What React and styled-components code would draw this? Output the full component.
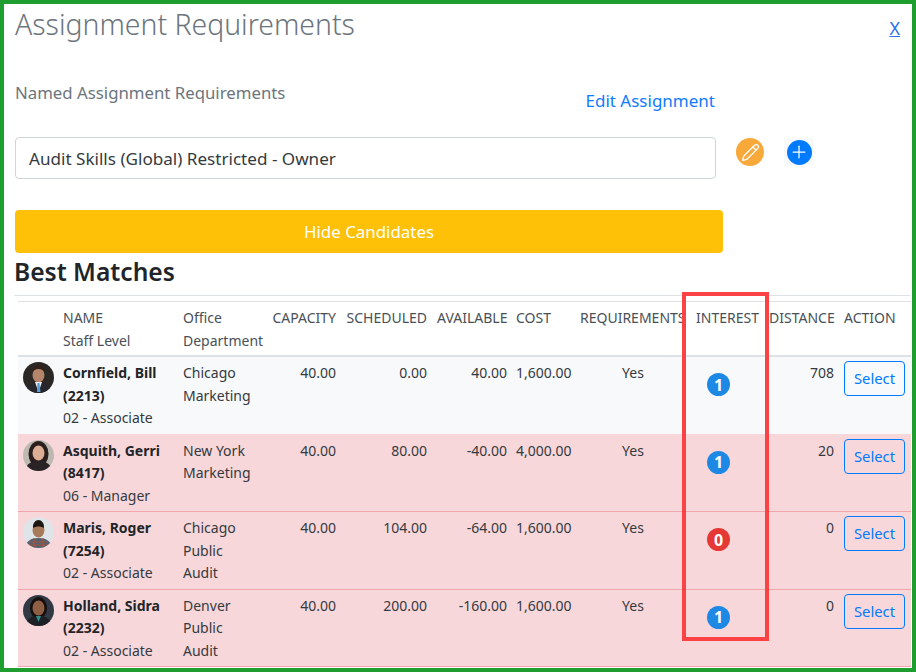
import React from 'react';
import styled, { createGlobalStyle } from 'styled-components';
import { Pencil, Plus } from 'lucide-react';

const GlobalStyle = createGlobalStyle`
    html, body {
        margin: 0;
        background: #fff;
    }
    body {
        font-family: "Noto Sans", "Open Sans", sans-serif;
        color: #212529;
    }
`;

const Frame = styled.div`
    position: relative;
    box-sizing: border-box;
    width: 916px;
    height: 672px;
    overflow: hidden;
    border: 4px solid #1f9e30;
    padding: 0 0 0 11px;
`;

const TitleRow = styled.div`
    display: flex;
    justify-content: space-between;
    align-items: flex-start;
    height: 72px;
    padding-right: 12px;
`;

const Title = styled.h1`
    margin: -1px 0 0;
    font-size: 28.4px;
    font-weight: 300;
    line-height: 42px;
    color: #6c757d;
`;

const CloseLink = styled.a`
    margin-top: 12px;
    font-size: 18px;
    line-height: 24px;
    color: #2f6fed;
    text-decoration: underline;
`;

const NamedRow = styled.div`
    display: flex;
    justify-content: space-between;
    width: 700px;
    height: 61px;
`;

const FieldLabel = styled.span`
    margin-top: 5px;
    font-size: 16.8px;
    line-height: 24px;
    color: #6c757d;
`;

const EditLink = styled.a`
    margin-top: 12px;
    font-size: 17px;
    line-height: 26px;
    color: #0f7bff;
`;

const InputRow = styled.div`
    display: flex;
    align-items: flex-start;
    height: 73px;
`;

const AssignmentInput = styled.div`
    box-sizing: border-box;
    width: 701px;
    height: 42px;
    padding: 1px 13px 0;
    border: 1px solid #ced4da;
    border-radius: 4px;
    font-size: 17.1px;
    line-height: 39px;
    color: #343a40;
`;

const RoundIcon = styled.span`
    display: flex;
    align-items: center;
    justify-content: center;
    width: ${p => p.$size}px;
    height: ${p => p.$size}px;
    margin: ${p => p.$margin || 0};
    border-radius: 50%;
    color: #fff;
    background: ${p => p.$color};
`;

const PlusBox = styled.span`
    display: flex;
    align-items: center;
    justify-content: center;
    width: 30px;
    height: 26px;
    margin: 2px 0 0 20px;
    background: #f8f9fa;
`;

const HideButton = styled.button`
    display: block;
    width: 708px;
    height: 43px;
    padding: 0;
    border: 0;
    border-radius: 4px;
    background: #ffc107;
    color: #fff;
    font: inherit;
    font-size: 16.9px;
`;

const SectionTitle = styled.h2`
    box-sizing: border-box;
    height: 43px;
    margin: 0 2px 0 -1px;
    padding: 2px 0 0;
    border-bottom: 1px solid #dee2e6;
    font-size: 24.6px;
    font-weight: 600;
    line-height: 34px;
    color: #212529;
`;

const MatchTable = styled.table`
    table-layout: fixed;
    width: 893px;
    margin: 5px 0 0 3px;
    border-collapse: collapse;
    font-size: 14px;
    line-height: 22.5px;
    color: #343a40;
`;

const HeadCell = styled.th`
    padding: 5px 5px 3px ${p => p.$tight ? 4 : 5}px;
    font-weight: 400;
    text-align: ${p => p.$align || 'left'};
    vertical-align: top;
    white-space: nowrap;
    border-top: 1px solid #dee2e6;
    border-bottom: 2px solid #dee2e6;
    color: #495057;
`;

const Row = styled.tr`
    background: ${p => p.$flagged ? '#f8d7da' : '#f8f9fa'};
`;

const Cell = styled.td`
    padding: 5px 5px 4px ${p => p.$tight ? 4 : 5}px;
    text-align: ${p => p.$align || 'left'};
    vertical-align: top;
    border-top: 1px solid ${p => p.$flagged ? '#f1a5ac' : 'transparent'};
    border-bottom: 1px solid ${p => p.$flagged ? '#f1a5ac' : 'transparent'};
`;

const StaffName = styled.div`
    font-weight: 700;
    color: #212529;
`;

const AvatarClip = styled.svg`
    display: block;
    width: 31px;
    height: 31px;
    border-radius: 50%;
`;

const Badge = styled.span`
    display: flex;
    align-items: center;
    justify-content: center;
    width: 23px;
    height: 23px;
    margin: 11px 0 0 11px;
    border-radius: 50%;
    background: ${p => p.$value > 0 ? '#1e88e5' : '#e53935'};
    color: #fff;
    font-size: 16px;
    font-weight: 700;
    line-height: 1;
`;

const SelectButton = styled.button`
    display: block;
    box-sizing: border-box;
    width: 61px;
    height: 35px;
    margin-top: -1px;
    padding: 0;
    border: 1px solid #007bff;
    border-radius: 4px;
    background: transparent;
    color: #007bff;
    font: inherit;
    font-size: 14.8px;
`;

const Highlight = styled.div`
    position: absolute;
    left: 678px;
    top: 288px;
    box-sizing: border-box;
    width: 87px;
    height: 349px;
    border: 4px solid #fb4245;
    pointer-events: none;
`;

const Avatar = ({ bg, skin, back, top, children }) => (
    <AvatarClip viewBox="0 0 31 31">
        <rect width="31" height="31" fill={bg}/>
        {back}
        <path d="M2 31c1-7 6-10 13.500-10S28 24 29 31z" fill={top}/>
        <ellipse cx="15.5" cy="13" rx="6" ry="7.5" fill={skin}/>
        {children}
    </AvatarClip>
);

const columns = [
    {key: 'avatar', width: 40, label: ''},
    {key: 'name', width: 120, label: 'NAME', sub: 'Staff Level'},
    {key: 'office', width: 87, label: 'Office', sub: 'Department'},
    {key: 'capacity', width: 76, label: 'CAPACITY', align: 'right'},
    {key: 'scheduled', width: 91, label: 'SCHEDULED', align: 'right'},
    {key: 'available', width: 80, label: 'AVAILABLE', align: 'right'},
    {key: 'cost', width: 63, label: 'COST', tight: true},
    {key: 'requirements', width: 116, label: 'REQUIREMENTS'},
    {key: 'interest', width: 73, label: 'INTEREST'},
    {key: 'distance', width: 75, label: 'DISTANCE', align: 'right'},
    {key: 'action', width: 72, label: 'ACTION'},
];

const staff = [
    {
        name: 'Cornfield, Bill', id: '2213', level: '02 - Associate', office: ['Chicago', 'Marketing'],
        scheduled: '0.00', available: '40.00', cost: '1,600.00', interest: 1, distance: 708, flagged: false,
        avatar: (
            <Avatar bg="#2b2725" skin="#b4856a" top="#26262c">
                <path d="M9.500 11c-.5-5 2.500-7.500 6-7.500s6.500 2.500 6 7.500c-1-3-3-4-6-4s-5 1-6 4z" fill="#33211a"/>
                <path d="M12 20l3.500 10 3.500-10z" fill="#e8eef2"/>
                <path d="M14.500 21h2l1 9h-3.500z" fill="#5b9bd5"/>
            </Avatar>
        ),
    },
    {
        name: 'Asquith, Gerri', id: '8417', level: '06 - Manager', office: ['New York', 'Marketing'],
        scheduled: '80.00', available: '-40.00', cost: '4,000.00', interest: 1, distance: 20, flagged: true,
        avatar: (
            <Avatar
                bg="#bdb8b2"
                skin="#dcae94"
                top="#2a2326"
                back={<ellipse cx="15.5" cy="14" rx="10" ry="13" fill="#2a1f1c"/>}
            />
        ),
    },
    {
        name: 'Maris, Roger', id: '7254', level: '02 - Associate', office: ['Chicago', 'Public', 'Audit'],
        scheduled: '104.00', available: '-64.00', cost: '1,600.00', interest: 0, distance: 0, flagged: true,
        avatar: (
            <Avatar bg="#dfe4e8" skin="#a87a5c" top="#54606e">
                <path d="M10 11c-.5-5 2.500-8 5.500-8s6 3 5.500 8c-3-2-8-2-11 0z" fill="#1d1612"/>
                <path d="M6 25h19M5 28h21M11 21v10M20 21v10" stroke="#a5553f" strokeWidth="1.200"/>
            </Avatar>
        ),
    },
    {
        name: 'Holland, Sidra', id: '2232', level: '02 - Associate', office: ['Denver', 'Public', 'Audit'],
        scheduled: '200.00', available: '-160.00', cost: '1,600.00', interest: 1, distance: 0, flagged: true,
        avatar: (
            <Avatar
                bg="#333944"
                skin="#8f5f45"
                top="#1d2024"
                back={<ellipse cx="15.5" cy="13" rx="8.500" ry="11" fill="#15100e"/>}
            >
                <path d="M13 21l2.500 6 2.500-6z" fill="#2f8f8a"/>
            </Avatar>
        ),
    },
];

class App extends React.Component {
    renderRow(person) {
        const flagged = person.flagged;
        return (
            <Row key={person.id} $flagged={flagged}>
                <Cell $flagged={flagged}>{person.avatar}</Cell>
                <Cell $flagged={flagged}>
                    <StaffName>{person.name}<br/>({person.id})</StaffName>
                    {person.level}
                </Cell>
                <Cell $flagged={flagged}>
                    {person.office.map(line => <div key={line}>{line}</div>)}
                </Cell>
                <Cell $flagged={flagged} $align="right">40.00</Cell>
                <Cell $flagged={flagged} $align="right">{person.scheduled}</Cell>
                <Cell $flagged={flagged} $align="right">{person.available}</Cell>
                <Cell $flagged={flagged} $tight>{person.cost}</Cell>
                <Cell $flagged={flagged} $align="center">Yes</Cell>
                <Cell $flagged={flagged}><Badge $value={person.interest}>{person.interest}</Badge></Cell>
                <Cell $flagged={flagged} $align="right">{person.distance}</Cell>
                <Cell $flagged={flagged}><SelectButton type="button">Select</SelectButton></Cell>
            </Row>
        );
    }

    render() {
        return (
            <Frame>
                <GlobalStyle/>
                <TitleRow>
                    <Title>Assignment Requirements</Title>
                    <CloseLink>X</CloseLink>
                </TitleRow>
                <NamedRow>
                    <FieldLabel>Named Assignment Requirements</FieldLabel>
                    <EditLink>Edit Assignment</EditLink>
                </NamedRow>
                <InputRow>
                    <AssignmentInput>Audit Skills (Global) Restricted - Owner</AssignmentInput>
                    <RoundIcon $size={28} $color="#f9a83a" $margin="1px 0 0 20px"><Pencil size={19} strokeWidth={1.6}/></RoundIcon>
                    <PlusBox><RoundIcon $size={25} $color="#007bff"><Plus size={20} strokeWidth={1.5}/></RoundIcon></PlusBox>
                </InputRow>
                <HideButton type="button">Hide Candidates</HideButton>
                <SectionTitle>Best Matches</SectionTitle>
                <MatchTable>
                    <colgroup>
                        {columns.map(col => <col key={col.key} width={col.width}/>)}
                    </colgroup>
                    <thead>
                        <tr>
                            {columns.map(col => (
                                <HeadCell key={col.key} $align={col.align} $tight={col.tight}>
                                    {col.label}
                                    {col.sub ? <div>{col.sub}</div> : null}
                                </HeadCell>
                            ))}
                        </tr>
                    </thead>
                    <tbody>
                        {staff.map(person => this.renderRow(person))}
                    </tbody>
                </MatchTable>
                <Highlight/>
            </Frame>
        );
    }
}

export default App;
